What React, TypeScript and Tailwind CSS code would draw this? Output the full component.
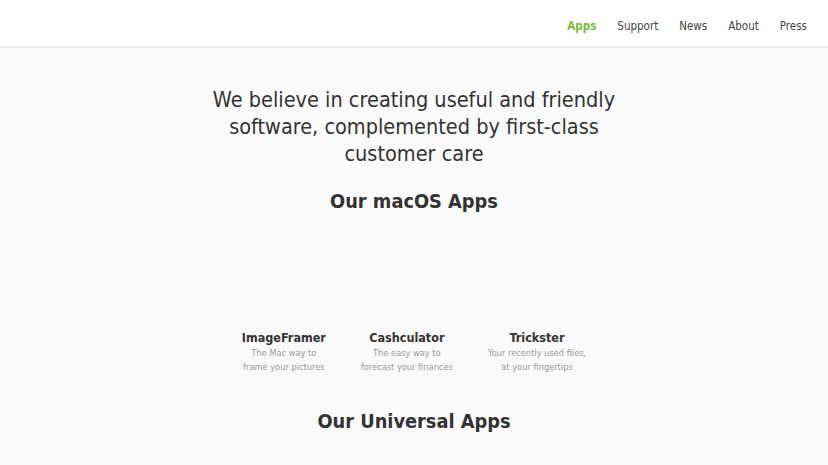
const navLinks = ["Apps", "Support", "News", "About", "Press"];

const macApps = [
  { name: "ImageFramer", desc: ["The Mac way to", "frame your pictures"] },
  { name: "Cashculator", desc: ["The easy way to", "forecast your finances"] },
  { name: "Trickster", desc: ["Your recently used files,", "at your fingertips"] },
];

export default function App() {
  return (
    <div className="min-h-screen bg-[#fafafa] text-[#333] font-['DejaVu_Sans_Condensed','DejaVu_Sans',sans-serif] [font-stretch:condensed]">
      <header className="h-[48px] bg-white border-b-2 border-[#eeeeee] flex justify-end items-center pr-[21px]">
        <nav className="flex gap-[21px] pt-[7px]">
          {navLinks.map((link, i) => (
            <a
              key={link}
              href="#"
              className={
                i === 0
                  ? "text-[11.5px] font-bold text-[#7cb83f]"
                  : "text-[11.5px] text-[#444]"
              }
            >
              {link}
            </a>
          ))}
        </nav>
      </header>

      <main className="flex flex-col items-center pt-[38px]">
        <p className="w-[420px] text-center text-[21.5px] leading-[27px] text-[#333]">
          We believe in creating useful and friendly software, complemented by first-class customer care
        </p>

        <h2 className="mt-[21px] text-[19.8px] font-bold leading-[28px]">Our macOS Apps</h2>

        {/* app icons area is empty in the screenshot */}
        <div className="mt-[18px] flex justify-center gap-[35px]">
          {macApps.map((app) => (
            <div key={app.name} className="flex flex-col items-center">
              <div className="h-[96px]" />
              <h3 className="text-[12.5px] font-bold leading-[16px]">{app.name}</h3>
              <p className="text-[9.2px] leading-[14px] text-[#999] text-center whitespace-nowrap">
                {app.desc[0]}
                <br />
                {app.desc[1]}
              </p>
            </div>
          ))}
        </div>

        <h2 className="mt-[34px] text-[19.8px] font-bold leading-[28px]">Our Universal Apps</h2>
      </main>
    </div>
  );
}
